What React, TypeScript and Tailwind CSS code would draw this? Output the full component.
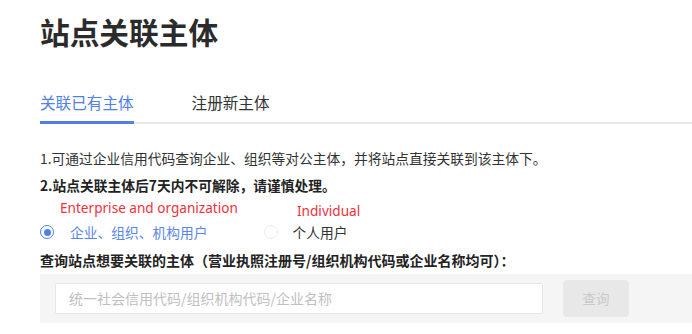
export default function App() {
  const cjk = { fontFamily: '"Noto Sans CJK SC", "Noto Sans", sans-serif' };

  return (
    <main className="w-[692px] h-[334px] bg-white overflow-hidden pl-[40px] text-[#333]" style={cjk}>
      <h1 className="mt-[12px] text-[29.7px] leading-[40px] font-bold text-[#2b2b2b]">站点关联主体</h1>

      {/* tabs */}
      <div className="mt-[39px] flex gap-[58px] border-b-2 border-[#e9e9e9]">
        <div className="-mb-[2px] pb-[8px] border-b-[3px] border-[#5080e6] text-[15.6px] leading-[22px] text-[#5080e6]">
          关联已有主体
        </div>
        <div className="pb-[8px] text-[15.6px] leading-[22px] text-[#333]">注册新主体</div>
      </div>

      {/* notes */}
      <div className="mt-[21px] text-[13.75px] leading-[27px]">
        <p>1.可通过企业信用代码查询企业、组织等对公主体，并将站点直接关联到该主体下。</p>
        <p className="font-bold text-[#222]">2.站点关联主体后7天内不可解除，请谨慎处理。</p>
      </div>

      {/* radio type */}
      <div className="flex text-[13.6px] leading-[18px] text-[#f0303c]" style={{ fontFamily: '"Noto Sans", sans-serif' }}>
        <span className="ml-[20px] w-[237px]">Enterprise and organization</span>
        <span className="mt-[3px]">Individual</span>
      </div>
      <div className="mt-[2px] flex items-center text-[13.75px] leading-[20px]">
        <span className="w-[14px] h-[14px] rounded-full border border-[#5080e6] flex items-center justify-center">
          <span className="w-[7px] h-[7px] rounded-full bg-[#5080e6]" />
        </span>
        <span className="ml-[16px] text-[#5a86e8]">企业、组织、机构用户</span>
        <span className="ml-[56px] w-[14px] h-[14px] rounded-full border border-[#ececec]" />
        <span className="ml-[15px] text-[#333]">个人用户</span>
      </div>

      <p className="mt-[8px] text-[14px] leading-[20px] font-bold text-[#222]">
        查询站点想要关联的主体（营业执照注册号/组织机构代码或企业名称均可）：
      </p>

      {/* search */}
      <div className="mt-[4px] h-[49px] bg-[#f5f5f5] flex items-center pl-[15px]">
        <div className="w-[488px] h-[31px] bg-white border border-[#e6e6e6] rounded-[2px] flex items-center pl-[13px] text-[14px] text-[#c0c0c0]">
          统一社会信用代码/组织机构代码/企业名称
        </div>
        <button className="ml-[20px] w-[66px] h-[37px] rounded-[4px] bg-[#e8e8e8] text-[13.5px] text-[#c9c9c9]">查询</button>
      </div>
    </main>
  );
}
